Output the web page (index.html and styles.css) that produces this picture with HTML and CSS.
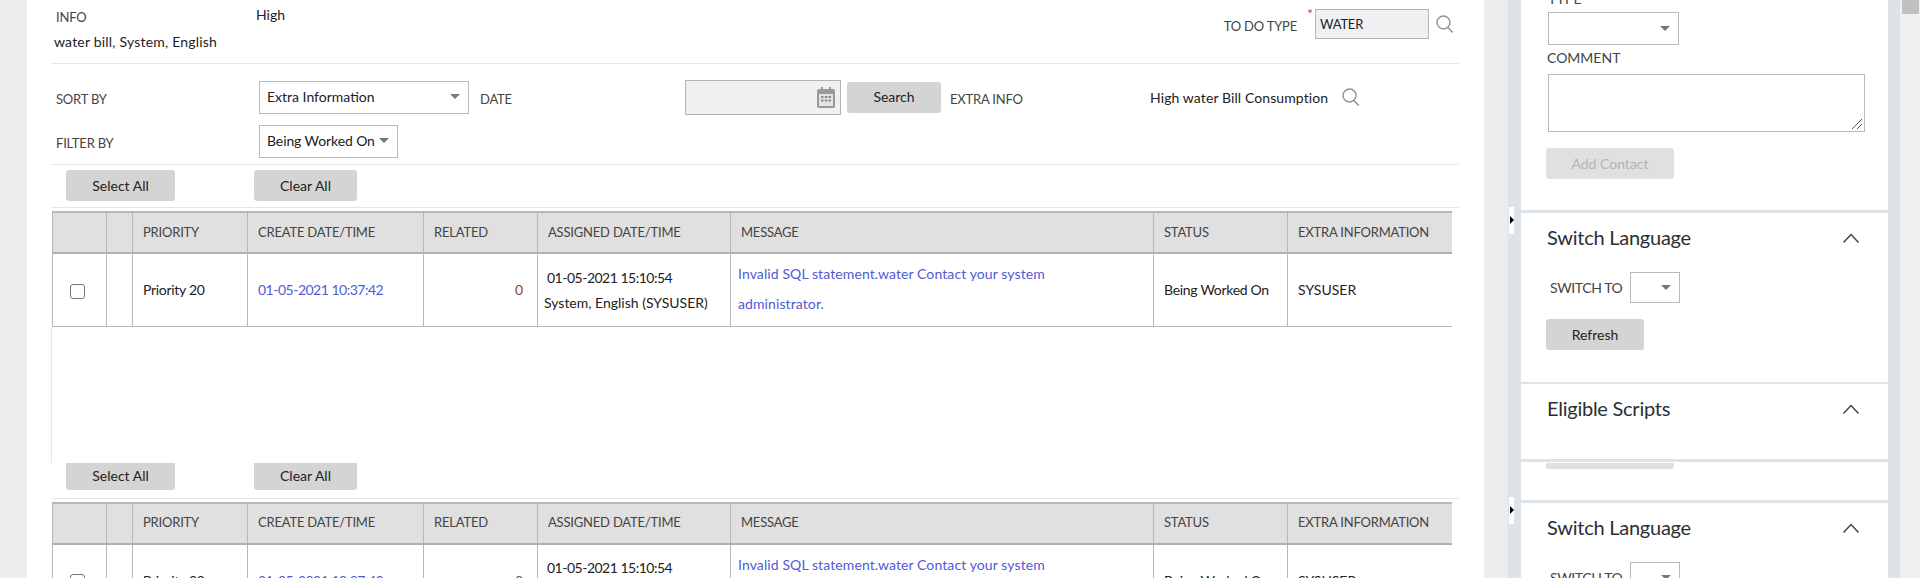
FILE: index.html
```html
<!DOCTYPE html>
<html lang="en">
<head>
	<meta charset="UTF-8">
	<title>To Do</title>
	<link rel="stylesheet" href="styles.css">
</head>
<body>
	<div class="page">
		<main class="main">
			<div class="head-row">
				<div class="info-col">
					<div class="lbl info-lbl">INFO</div>
					<div class="info-val">water bill, System, English</div>
				</div>
				<div class="high">High</div>
				<div class="todo">
					<span class="lbl todo-lbl">TO DO TYPE</span>
					<span class="req">*</span>
					<span class="readonly">WATER</span>
					<svg class="mag" viewBox="0 0 18 18"><circle cx="7.500" cy="7.500" r="6.500"/><path d="M11.800 12.500l5 5"/></svg>
				</div>
			</div>

			<div class="filters">
				<div class="f-row">
					<span class="lbl f-lbl">SORT BY</span>
					<span class="sel sel-sort">Extra Information<i class="caret"></i></span>
					<span class="lbl date-lbl">DATE</span>
					<span class="date-box">
						<svg class="cal" viewBox="0 0 18 21"><path class="cal-body" d="M4 0h2v2h6v-2h2v2h2q2 0 2 2v15q0 2-2 2h-14q-2 0-2-2v-15q0-2 2-2h2z"/><path class="cal-grid" d="M2 7h14v12h-14z"/><path class="cal-dots" d="M4 9h2.500v2h-2.500zM7.800 9h2.500v2h-2.500zM11.500 9h2.500v2h-2.500zM4 12.500h2.500v2h-2.500zM7.800 12.500h2.500v2h-2.500zM11.500 12.500h2.500v2h-2.500z"/></svg>
					</span>
					<span class="btn btn-search">Search</span>
					<span class="lbl extra-lbl">EXTRA INFO</span>
					<span class="extra-val">High water Bill Consumption</span>
					<svg class="mag mag-extra" viewBox="0 0 18 18"><circle cx="7.500" cy="7.500" r="6.500"/><path d="M11.800 12.500l5 5"/></svg>
				</div>
				<div class="f-row f-row2">
					<span class="lbl f-lbl">FILTER BY</span>
					<span class="sel sel-filter">Being Worked On<i class="caret"></i></span>
				</div>
			</div>

			<div class="actions">
				<span class="btn btn-select">Select All</span>
				<span class="btn btn-clear">Clear All</span>
			</div>

			<div class="grid-wrap">
				<table class="grid">
					<colgroup><col class="c1"><col class="c2"><col class="c3"><col class="c4"><col class="c5"><col class="c6"><col class="c7"><col class="c8"><col class="c9"></colgroup>
					<thead>
						<tr><th></th><th></th><th>PRIORITY</th><th>CREATE DATE/TIME</th><th>RELATED</th><th>ASSIGNED DATE/TIME</th><th>MESSAGE</th><th>STATUS</th><th>EXTRA INFORMATION</th></tr>
					</thead>
					<tbody>
						<tr>
							<td class="chk"><span class="box"></span></td>
							<td></td>
							<td class="plain">Priority 20</td>
							<td class="link date">01-05-2021 10:37:42</td>
							<td class="num">0</td>
							<td class="assigned"><div class="as1 date">01-05-2021 15:10:54</div><div class="as2">System, English (SYSUSER)</div></td>
							<td class="link msg">Invalid SQL statement.water Contact your system administrator.</td>
							<td class="plain">Being Worked On</td>
							<td>SYSUSER</td>
						</tr>
					</tbody>
				</table>
				<div class="blank"></div>
			</div>

			<div class="actions actions-cut">
				<span class="btn btn-select">Select All</span>
				<span class="btn btn-clear">Clear All</span>
			</div>

			<div class="grid-wrap">
				<table class="grid">
					<colgroup><col class="c1"><col class="c2"><col class="c3"><col class="c4"><col class="c5"><col class="c6"><col class="c7"><col class="c8"><col class="c9"></colgroup>
					<thead>
						<tr><th></th><th></th><th>PRIORITY</th><th>CREATE DATE/TIME</th><th>RELATED</th><th>ASSIGNED DATE/TIME</th><th>MESSAGE</th><th>STATUS</th><th>EXTRA INFORMATION</th></tr>
					</thead>
					<tbody>
						<tr>
							<td class="chk"><span class="box"></span></td>
							<td></td>
							<td class="plain">Priority 20</td>
							<td class="link date">01-05-2021 10:37:42</td>
							<td class="num">0</td>
							<td class="assigned"><div class="as1 date">01-05-2021 15:10:54</div><div class="as2">System, English (SYSUSER)</div></td>
							<td class="link msg">Invalid SQL statement.water Contact your system administrator.</td>
							<td class="plain">Being Worked On</td>
							<td>SYSUSER</td>
						</tr>
					</tbody>
				</table>
			</div>
		</main>

		<aside class="side">
			<span class="handle handle1"></span>
			<span class="handle handle2"></span>
			<div class="side-inner">
				<section class="panel panel-contact">
					<div class="s-lbl type-lbl">TYPE</div>
					<span class="sel sel-type"><i class="caret"></i></span>
					<div class="s-lbl comment-lbl">COMMENT</div>
					<div class="comment">
						<svg class="grip" viewBox="0 0 12 12"><path d="M1 11L11 1M6 11l5-5"/></svg>
					</div>
					<span class="btn btn-add">Add Contact</span>
				</section>

				<section class="panel panel-lang">
					<div class="p-head"><h2>Switch Language</h2><svg class="chev" viewBox="0 0 18 12"><path d="M1.500 10.500L9 2.500l7.500 8"/></svg></div>
					<div class="lang-row"><span class="s-lbl">SWITCH TO</span><span class="sel sel-lang"><i class="caret"></i></span></div>
					<span class="btn btn-refresh">Refresh</span>
				</section>

				<section class="panel panel-scripts">
					<div class="p-head"><h2>Eligible Scripts</h2><svg class="chev" viewBox="0 0 18 12"><path d="M1.500 10.500L9 2.500l7.500 8"/></svg></div>
				</section>

				<section class="panel panel-stub">
					<span class="stub"></span>
				</section>

				<section class="panel panel-lang2">
					<div class="p-head"><h2>Switch Language</h2><svg class="chev" viewBox="0 0 18 12"><path d="M1.500 10.500L9 2.500l7.500 8"/></svg></div>
					<div class="lang-row"><span class="s-lbl">SWITCH TO</span><span class="sel sel-lang"><i class="caret"></i></span></div>
				</section>
			</div>
		</aside>

		<div class="scroll"><span class="thumb"></span></div>
	</div>
</body>
</html>
```

FILE: styles.css
```css
html, body {
	margin: 0;
	height: 578px;
	overflow: hidden;
}
body {
	font-family: Lato, "Open Sans", "Liberation Sans", sans-serif;
	font-size: 14px;
	color: #222;
	background: #ececec;
}
.page {
	display: flex;
	height: 578px;
	overflow: hidden;
}

/* left work area */
.main {
	width: 1457px;
	margin-left: 27px;
	padding: 0 25px 0 24px;
	box-sizing: border-box;
	background: #fff;
	flex: none;
	overflow: hidden;
}
.lbl {
	color: #444;
	font-size: 13px;
	letter-spacing: -0.2px;
}
.head-row {
	display: flex;
	height: 63px;
	border-bottom: 1px solid #e6e6e6;
}
.info-col {
	width: 205px;
	flex: none;
}
.info-lbl {
	margin: 9px 0 0 5px;
	line-height: 17px;
}
.info-val {
	margin: 7px 0 0 3px;
	line-height: 17px;
	letter-spacing: 0.2px;
}
.high {
	margin-top: 6px;
	line-height: 17px;
}
.todo {
	margin-left: auto;
	margin-right: 5px;
	display: flex;
	align-items: flex-start;
	padding-top: 9px;
}
.todo-lbl {
	margin-top: 9px;
	line-height: 17px;
}
.req {
	color: #b5522a;
	margin-left: 10px;
	width: 8px;
	line-height: 10px;
}
.readonly {
	width: 114px;
	height: 30px;
	box-sizing: border-box;
	background: #f0f0f2;
	border: 1px solid #b4b4b4;
	padding-left: 4px;
	line-height: 28px;
	margin-right: 7px;
	font-size: 13px;
	letter-spacing: -0.2px;
}
.mag {
	width: 18px;
	height: 18px;
	margin-top: 6px;
	fill: none;
	stroke: #8e9194;
	stroke-width: 1.400;
}

.filters {
	height: 100px;
	border-bottom: 1px solid #e6e6e6;
}
.f-row {
	display: flex;
	align-items: center;
	height: 36px;
	padding-top: 15px;
}
.f-row2 {
	padding-top: 8px;
}
.f-lbl {
	width: 208px;
	padding-left: 5px;
	box-sizing: border-box;
	flex: none;
	padding-top: 4px;
}
.sel {
	display: inline-flex;
	align-items: center;
	height: 33px;
	box-sizing: border-box;
	border: 1px solid #b9b9b9;
	background: #fff;
	padding: 0 0 1px 7px;
	flex: none;
	white-space: nowrap;
}
.caret {
	margin-left: auto;
	margin-right: 8px;
	border-left: 5px solid transparent;
	border-right: 5px solid transparent;
	border-top: 5px solid #777;
}
.sel-sort {
	width: 210px;
}
.sel-filter {
	width: 139px;
	letter-spacing: -0.1px;
}
.date-lbl {
	margin-left: 11px;
	width: 205px;
	flex: none;
	padding-top: 4px;
}
.date-box {
	width: 156px;
	height: 35px;
	box-sizing: border-box;
	background: #f0f0f2;
	border: 1px solid #b4b4b4;
	display: flex;
	align-items: center;
	justify-content: flex-end;
	padding-right: 5px;
	flex: none;
}
.cal {
	width: 18px;
	height: 21px;
}
.cal-body {
	fill: #999;
}
.cal-grid {
	fill: #e4e4e4;
}
.cal-dots {
	fill: #8a8a8a;
}
.btn {
	display: inline-flex;
	align-items: center;
	justify-content: center;
	height: 31px;
	box-sizing: border-box;
	padding-bottom: 1px;
	background: #d4d4d4;
	border-radius: 3px;
	color: #222;
	flex: none;
}
.btn-search {
	width: 94px;
	margin-left: 6px;
}
.extra-lbl {
	margin-left: 9px;
	width: 200px;
	flex: none;
	padding-top: 4px;
}
.extra-val {
	width: 192px;
	flex: none;
	white-space: nowrap;
	letter-spacing: 0.1px;
}
.mag-extra {
	margin: 0;
}

.actions {
	display: flex;
	height: 43px;
	padding: 5px 0 0 15px;
	box-sizing: border-box;
	border-bottom: 1px solid #e6e6e6;
}
.btn-select {
	width: 109px;
}
.btn-clear {
	width: 103px;
	margin-left: 79px;
}
.actions-cut {
	height: 36px;
	padding-top: 0;
	align-items: flex-start;
	overflow: hidden;
}
.actions-cut .btn {
	height: 27px;
	border-radius: 0 0 3px 3px;
}

.grid-wrap {
	margin: 3px 0 0 1px;
}
.grid {
	width: 1399px;
	table-layout: fixed;
	border-collapse: collapse;
}
.c1 { width: 54px; }
.c2 { width: 26px; }
.c3 { width: 115px; }
.c4 { width: 176px; }
.c5 { width: 114px; }
.c6 { width: 193px; }
.c7 { width: 423px; }
.c8 { width: 134px; }
.c9 { width: 164px; }
.grid th {
	height: 37px;
	padding: 0 0 2px 10px;
	background: #e0e0e0;
	border: 1px solid #b8b8b8;
	border-top-width: 2px;
	border-bottom: 2px solid #b0b0b0;
	text-align: left;
	font-size: 13px;
	font-weight: 400;
	letter-spacing: -0.2px;
	color: #444;
	white-space: nowrap;
	overflow: hidden;
}
.grid td {
	height: 73px;
	box-sizing: border-box;
	padding: 0 0 0 10px;
	border: 1px solid #b8b8b8;
	vertical-align: middle;
}
.grid th:last-child,
.grid td:last-child {
	border-right: 0;
}
.grid .chk {
	padding: 0 4px 0 0;
	text-align: center;
}
.box {
	display: inline-block;
	width: 15px;
	height: 15px;
	box-sizing: border-box;
	border: 1px solid #777;
	border-radius: 3px;
	vertical-align: middle;
}
.grid .link {
	color: #4f5bd5;
}
.grid .plain {
	letter-spacing: -0.3px;
}
.date {
	letter-spacing: -0.5px;
}
.grid .num {
	color: #8a4a2a;
	text-align: right;
	padding-right: 14px;
}
.grid .assigned {
	padding: 0 0 0 6px;
}
.as1 {
	margin-left: 3px;
	line-height: 25px;
}
.as2 {
	line-height: 25px;
	white-space: nowrap;
}
.grid .msg {
	padding: 5px 60px 0 7px;
	line-height: 30px;
	vertical-align: top;
	letter-spacing: 0.1px;
}
.blank {
	height: 136px;
	border-left: 1px solid #e6e6e6;
	margin-left: -1px;
}

/* gap and right panel */
.side {
	position: relative;
	margin-left: 24px;
	width: 392px;
	flex: none;
	background: #dce4ea;
	padding: 0 12px 0 13px;
	box-sizing: border-box;
}
.side-inner {
	height: 578px;
	overflow: hidden;
}
.handle {
	position: absolute;
	left: 1px;
	width: 5px;
	height: 27px;
	background: #fff;
}
.handle::after {
	content: "";
	position: absolute;
	left: 1px;
	top: 9px;
	border-top: 4px solid transparent;
	border-bottom: 4px solid transparent;
	border-left: 4px solid #000;
}
.handle1 {
	top: 207px;
}
.handle2 {
	top: 497px;
}
.panel {
	background: #fff;
	padding-left: 25px;
	box-sizing: border-box;
	position: relative;
	overflow: hidden;
}
.panel-contact {
	height: 210px;
}
.panel-lang {
	height: 169px;
	margin-top: 3px;
}
.panel-scripts {
	height: 75px;
	margin-top: 2px;
}
.panel-stub {
	height: 38px;
	margin-top: 3px;
}
.panel-lang2 {
	height: 80px;
	margin-top: 3px;
}
.s-lbl {
	color: #444;
	line-height: 16px;
}
.type-lbl {
	margin: -9px 0 5px 2px;
	height: 16px;
}
.sel-type {
	display: flex;
	width: 131px;
	margin-left: 2px;
}
.comment-lbl {
	margin: 5px 0 0 1px;
}
.comment {
	position: relative;
	width: 317px;
	height: 58px;
	box-sizing: border-box;
	border: 1px solid #b9b9b9;
	margin: 8px 0 16px 2px;
}
.grip {
	position: absolute;
	right: 1px;
	bottom: 1px;
	width: 12px;
	height: 12px;
	fill: none;
	stroke: #555;
}
.btn-add {
	width: 128px;
	background: #e0e0e0;
	color: #b4b4b4;
}
.p-head {
	display: flex;
	justify-content: space-between;
	align-items: center;
	height: 50px;
	padding-right: 28px;
}
.p-head h2 {
	margin: 0;
	padding: 0 0 2px 1px;
	font-size: 20px;
	font-weight: 400;
	letter-spacing: -0.25px;
	color: #2a2f36;
}
.chev {
	width: 18px;
	height: 12px;
	fill: none;
	stroke: #444;
	stroke-width: 1.500;
}
.lang-row {
	display: flex;
	align-items: center;
	margin-top: 9px;
	padding-left: 4px;
}
.lang-row .s-lbl {
	width: 80px;
	flex: none;
	letter-spacing: -0.4px;
}
.sel-lang {
	width: 50px;
	height: 31px;
}
.btn-refresh {
	width: 98px;
	margin-top: 16px;
}
.stub {
	display: block;
	width: 128px;
	height: 6px;
	margin-top: 1px;
	background: #e0e0e0;
	border-radius: 0 0 2px 2px;
}

.scroll {
	flex: 1;
	background: #f0f0f0;
	padding-left: 2px;
}
.thumb {
	display: block;
	width: 17px;
	height: 14px;
	background: #c1c1c1;
}
```
